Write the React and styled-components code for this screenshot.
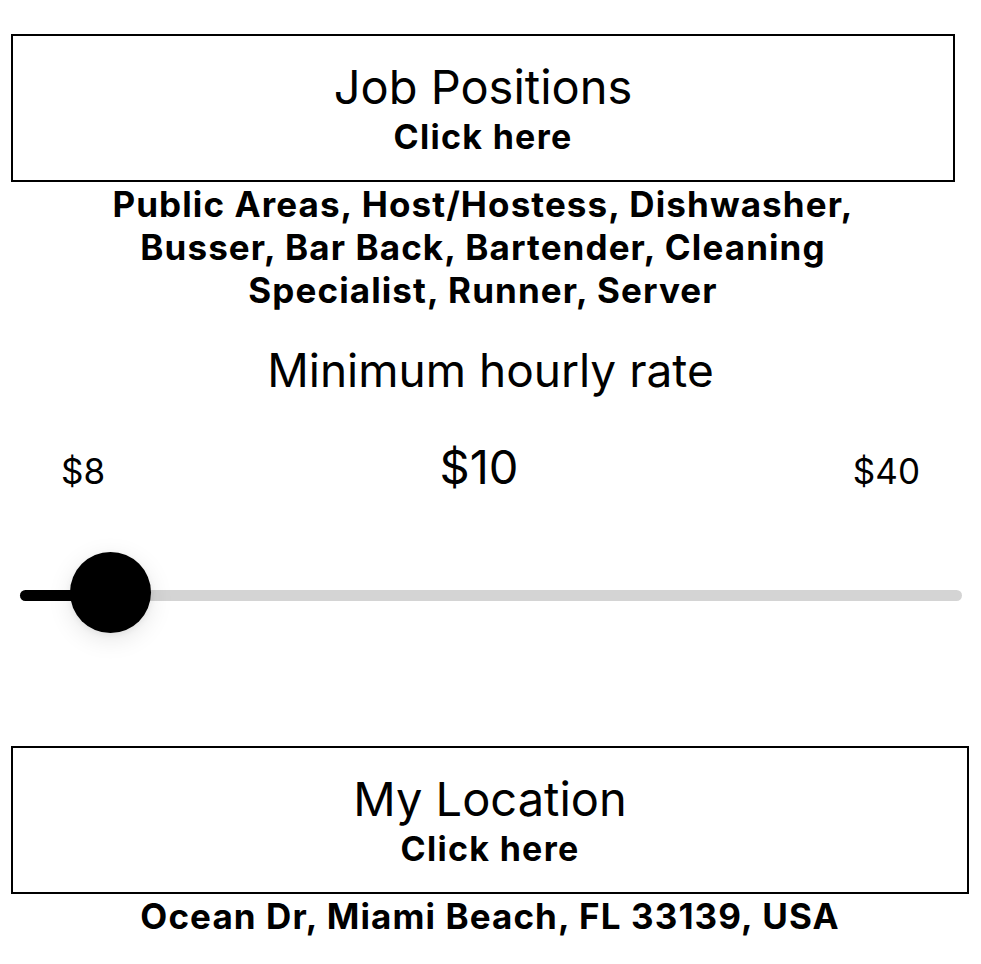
import React from 'react';
import styled, { createGlobalStyle } from 'styled-components';

const GlobalStyle = createGlobalStyle`
  html, body {
    margin: 0;
    padding: 0;
    background: #ffffff;
  }
  body {
    font-family: Inter, "Noto Sans", sans-serif;
    color: #000000;
  }
`;

const Page = styled.div`
  width: 981px;
  padding-top: 34px;
  display: flex;
  flex-direction: column;
  align-items: center;
`;

const Section = styled.div`
  width: ${(p) => p.$width}px;
  margin-left: 11px;
  margin-top: ${(p) => p.$top || 0}px;
  align-self: flex-start;
  display: flex;
  flex-direction: column;
  align-items: center;
`;

const PickerBox = styled.button`
  box-sizing: border-box;
  width: 100%;
  height: 148px;
  border: 2px solid #000;
  background: #fff;
  display: flex;
  flex-direction: column;
  align-items: center;
  justify-content: center;
  padding: 2px 0 0;
  font-family: inherit;
  color: #000;
  cursor: pointer;
`;

const BoxTitle = styled.div`
  font-size: 47px;
  font-weight: 400;
  line-height: 50px;
`;

const BoxHint = styled.div`
  font-size: 34px;
  font-weight: 700;
  line-height: 40px;
  letter-spacing: 1.3px;
  margin-top: 5px;
`;

const Summary = styled.div`
  max-width: ${(p) => p.$maxWidth}px;
  text-align: center;
  font-size: 35px;
  font-weight: 700;
  line-height: 43px;
  letter-spacing: 1.1px;
  margin-top: 1px;
`;

const SectionTitle = styled.div`
  font-size: 46px;
  line-height: 54px;
  margin-top: 31px;
`;

const RangeLabels = styled.div`
  width: 859px;
  margin-top: 42px;
  display: flex;
  align-items: baseline;
  justify-content: space-between;
`;

const RangeEnd = styled.span`
  font-size: 35px;
  line-height: 40px;
`;

const RangeValue = styled.span`
  font-size: 47px;
  line-height: 56px;
`;

const Slider = styled.div`
  position: relative;
  width: 942px;
  height: 84px;
  margin-top: 55px;
`;

const Track = styled.div`
  position: absolute;
  left: 0;
  right: 0;
  top: 40px;
  height: 11px;
  border-radius: 6px;
  background: #d4d4d4;
`;

const Fill = styled.div`
  position: absolute;
  left: 0;
  top: 40px;
  height: 11px;
  border-radius: 6px;
  background: #000;
`;

const Thumb = styled.div`
  position: absolute;
  top: 2px;
  width: 81px;
  height: 81px;
  margin-left: -40px;
  border-radius: 50%;
  background: #000;
  box-shadow: 0 6px 24px rgba(0, 0, 0, 0.1), 0 2px 6px rgba(0, 0, 0, 0.06);
`;

const min = 8;
const max = 40;
const value = 10;
const sliderWidth = 942;
const thumbR = 40;

export default function App() {
  const frac = (value - min) / (max - min);
  const thumbX = thumbR + frac * (sliderWidth - 2 * thumbR) - 3;

  return (
    <>
      <GlobalStyle />
      <Page>
        <Section $width={944}>
          <PickerBox>
            <BoxTitle>Job Positions</BoxTitle>
            <BoxHint>Click here</BoxHint>
          </PickerBox>
          <Summary $maxWidth={760}>
            Public Areas, Host/Hostess, Dishwasher, Busser, Bar Back, Bartender, Cleaning Specialist, Runner, Server
          </Summary>
        </Section>

        <SectionTitle>Minimum hourly rate</SectionTitle>
        <RangeLabels>
          <RangeEnd>${min}</RangeEnd>
          <RangeValue>${value}</RangeValue>
          <RangeEnd>${max}</RangeEnd>
        </RangeLabels>
        <Slider>
          <Track />
          <Fill style={{ width: thumbX }} />
          <Thumb style={{ left: thumbX }} />
        </Slider>

        <Section $width={958} $top={112}>
          <PickerBox>
            <BoxTitle>My Location</BoxTitle>
            <BoxHint>Click here</BoxHint>
          </PickerBox>
          <Summary $maxWidth={900}>Ocean Dr, Miami Beach, FL 33139, USA</Summary>
        </Section>
      </Page>
    </>
  );
}
